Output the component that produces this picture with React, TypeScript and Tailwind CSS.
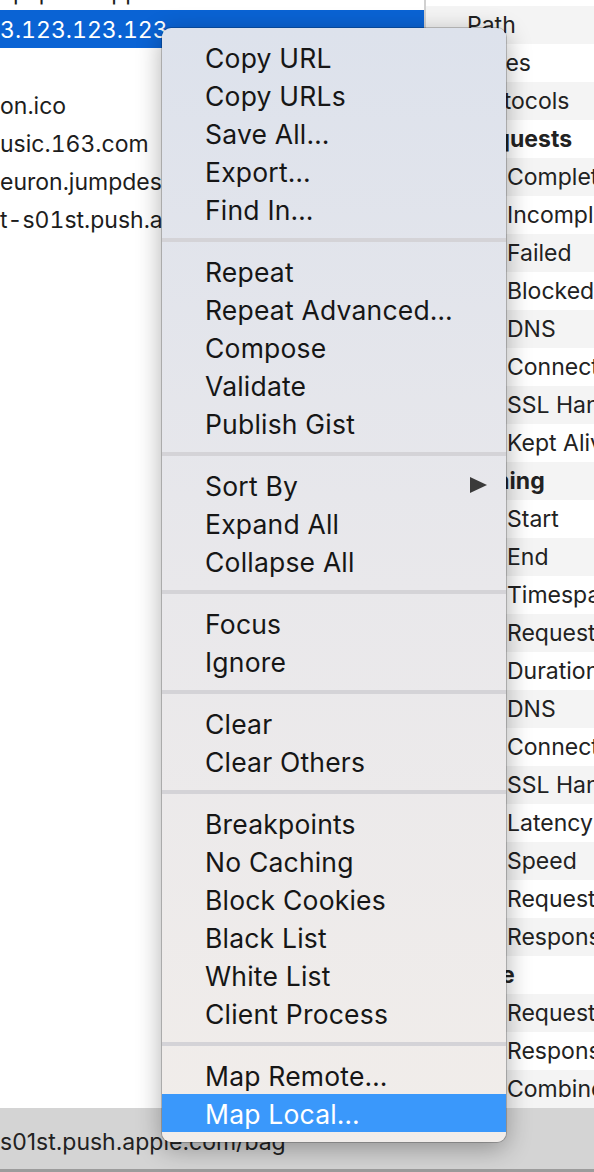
import React from 'react';

type MenuItem = { label: string; submenu?: boolean; active?: boolean };

// groups of the context menu, separators sit between them
const menuGroups: MenuItem[][] = [
  [{ label: 'Copy URL' }, { label: 'Copy URLs' }, { label: 'Save All…' }, { label: 'Export…' }, { label: 'Find In…' }],
  [{ label: 'Repeat' }, { label: 'Repeat Advanced…' }, { label: 'Compose' }, { label: 'Validate' }, { label: 'Publish Gist' }],
  [{ label: 'Sort By', submenu: true }, { label: 'Expand All' }, { label: 'Collapse All' }],
  [{ label: 'Focus' }, { label: 'Ignore' }],
  [{ label: 'Clear' }, { label: 'Clear Others' }],
  [
    { label: 'Breakpoints' },
    { label: 'No Caching' },
    { label: 'Block Cookies' },
    { label: 'Black List' },
    { label: 'White List' },
    { label: 'Client Process' },
  ],
  [{ label: 'Map Remote…' }, { label: 'Map Local…', active: true }],
];

const hostRows = [
  { text: 'api.push.apple.com' },
  { text: '3.123.123.123', selected: true },
  { text: '' },
  { text: 'on.ico' },
  { text: 'usic.163.com' },
  { text: 'euron.jumpdesktop.com' },
  { text: 't-s01st.push.apple.com' },
];

// overview tree on the right: level 0 = top, 1 = child
const overview: { label: string; level: 0 | 1; bold?: boolean }[] = [
  { label: 'Path', level: 0 },
  { label: 'Notes', level: 0 },
  { label: 'Protocols', level: 0 },
  { label: 'Requests', level: 0, bold: true },
  { label: 'Completed', level: 1 },
  { label: 'Incomplete', level: 1 },
  { label: 'Failed', level: 1 },
  { label: 'Blocked', level: 1 },
  { label: 'DNS', level: 1 },
  { label: 'Connects', level: 1 },
  { label: 'SSL Handshakes', level: 1 },
  { label: 'Kept Alive', level: 1 },
  { label: 'Timing', level: 0, bold: true },
  { label: 'Start', level: 1 },
  { label: 'End', level: 1 },
  { label: 'Timespan', level: 1 },
  { label: 'Requests / sec', level: 1 },
  { label: 'Duration', level: 1 },
  { label: 'DNS', level: 1 },
  { label: 'Connect', level: 1 },
  { label: 'SSL Handshake', level: 1 },
  { label: 'Latency', level: 1 },
  { label: 'Speed', level: 1 },
  { label: 'Request Speed', level: 1 },
  { label: 'Response Speed', level: 1 },
  { label: 'Size', level: 0, bold: true },
  { label: 'Request', level: 1 },
  { label: 'Response', level: 1 },
  { label: 'Combined', level: 1 },
];

const ContextMenu: React.FC = () => (
  <div className="absolute left-[162px] top-[28px] w-[344px] overflow-hidden rounded-[9px] bg-linear-to-b from-[#dde2ec] via-[#e9e8eb] to-[#f1edea] py-[10px] shadow-[0_6px_26px_rgba(0,0,0,0.33)] ring-1 ring-black/20">
    {menuGroups.map((group, gi) => (
      <div key={gi}>
        {gi > 0 && (
          <div className="py-[10px]">
            <div className="h-[4px] bg-[#d4d3d7]" />
          </div>
        )}
        {group.map((item) => (
          <div
            key={item.label}
            className={`flex h-[38px] items-center justify-between pl-[43px] pr-[19px] pt-[3px] text-[26.5px] tracking-[0.2px] ${
              item.active ? 'bg-[#3a98fb] text-white' : 'text-[#161616]'
            }`}
          >
            <span>{item.label}</span>
            {item.submenu && (
              <svg width="17" height="16" viewBox="0 0 17 16" className="-mt-[3px]">
                <polygon points="0,0 17,8 0,16" fill="#3a3a3a" />
              </svg>
            )}
          </div>
        ))}
      </div>
    ))}
  </div>
);

export default function App() {
  return (
    <div className="relative h-[1172px] w-[594px] overflow-hidden bg-white font-['Inter','Noto_Sans',sans-serif] text-[#1d1d1d]">
      <div className="flex h-[1108px]">
        {/* host list */}
        <div className="w-[424px] shrink-0 overflow-hidden">
          <div className="-mt-[28px]">
            {hostRows.map((row, i) => (
              <div
                key={i}
                className={`flex h-[38px] items-center whitespace-nowrap pt-[2px] text-[23px] tabular-nums ${
                  row.selected ? 'bg-[#0a63d4] text-white' : ''
                }`}
              >
                {row.text}
              </div>
            ))}
          </div>
        </div>
        <div className="w-[2px] shrink-0 bg-[#d0d0d0]" />
        {/* overview */}
        <div className="flex-1 overflow-hidden pt-[6px]">
          {overview.map((row, i) => (
            <div
              key={i}
              className={`flex h-[38px] items-center whitespace-nowrap text-[23px] text-[#222] ${
                i % 2 === 0 ? 'bg-[#f4f4f4]' : 'bg-white'
              } ${row.level === 0 ? 'pl-[41px]' : 'pl-[81px]'} ${row.bold ? 'font-bold' : ''}`}
            >
              {row.label}
            </div>
          ))}
        </div>
      </div>
      {/* status bar */}
      <div className="flex h-[64px] items-center border-b-[3px] border-[#9c9c9c] bg-[#d4d4d4] pt-[7px] text-[23px] whitespace-nowrap text-[#222]">
        s01st.push.apple.com/bag
      </div>
      <ContextMenu />
    </div>
  );
}
